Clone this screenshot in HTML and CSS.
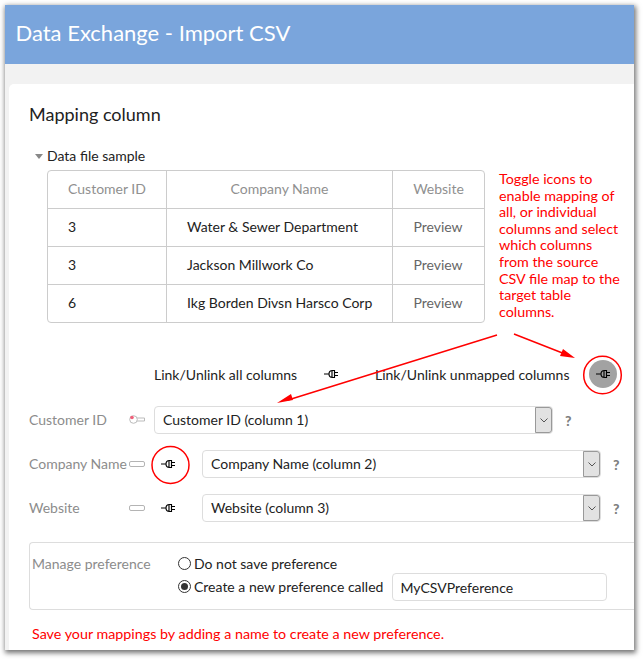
FILE: index.html
```html
<!DOCTYPE html>
<html lang="en">
<head>
<meta charset="utf-8">
<title>Import CSV</title>
<link rel="stylesheet" href="styles.css">
</head>
<body>
<svg width="0" height="0" class="defs">
  <symbol id="plug" viewBox="0 0 14 10">
    <path d="M0 5h5M10.500 1.500H8.500a3.500 3.500 0 0 0 0 7h2ZM8 1.500v7M10.500 3.500H14M10.500 6.500H14" fill="none" stroke="#000" stroke-width="1.150"/>
  </symbol>
</svg>
<div class="frame">
  <header class="banner">Data Exchange - Import CSV</header>
  <main class="card">
    <h2 class="title">Mapping column</h2>
    <div class="sample-head"><span class="tri"></span>Data file sample</div>
    <div class="table">
      <div class="cell head">Customer ID</div><div class="cell head">Company Name</div><div class="cell head last">Website</div>
      <div class="cell num">3</div><div class="cell name">Water &amp; Sewer Department</div><div class="cell prev">Preview</div>
      <div class="cell num">3</div><div class="cell name">Jackson Millwork Co</div><div class="cell prev">Preview</div>
      <div class="cell num">6</div><div class="cell name">Ikg Borden Divsn Harsco Corp</div><div class="cell prev">Preview</div>
    </div>
    <div class="link-row">
      <span class="link-all">Link/Unlink all columns</span>
      <svg class="plug"><use href="#plug"/></svg>
      <span class="link-un">Link/Unlink unmapped columns</span>
      <span class="plug-btn"><svg class="plug"><use href="#plug"/></svg></span>
    </div>
    <div class="map-row">
      <span class="map-label">Customer ID</span>
      <svg class="key" viewBox="0 0 16 9"><path d="M7.500 3h8v3h-8" fill="#fff" stroke="#bbb"/><circle cx="4.500" cy="4.500" r="3.800" fill="#fff" stroke="#bbb"/><circle cx="3" cy="2.500" r="1.800" fill="#f0607a"/></svg>
      <div class="select"><span class="sel-text">Customer ID (column 1)</span><span class="sel-btn"><svg viewBox="0 0 8 5"><path d="M.5.500 4 4 7.500.500" fill="none" stroke="#555"/></svg></span></div>
      <span class="q">?</span>
    </div>
    <div class="map-row">
      <span class="map-label">Company Name</span>
      <span class="slot"></span>
      <svg class="plug row-plug"><use href="#plug"/></svg>
      <div class="select"><span class="sel-text">Company Name (column 2)</span><span class="sel-btn"><svg viewBox="0 0 8 5"><path d="M.5.500 4 4 7.500.500" fill="none" stroke="#555"/></svg></span></div>
      <span class="q">?</span>
    </div>
    <div class="map-row">
      <span class="map-label">Website</span>
      <span class="slot"></span>
      <svg class="plug row-plug"><use href="#plug"/></svg>
      <div class="select"><span class="sel-text">Website (column 3)</span><span class="sel-btn"><svg viewBox="0 0 8 5"><path d="M.5.500 4 4 7.500.500" fill="none" stroke="#555"/></svg></span></div>
      <span class="q">?</span>
    </div>
    <section class="pref">
      <span class="pref-label">Manage preference</span>
      <div class="pref-opts">
        <div class="opt"><span class="radio"></span>Do not save preference</div>
        <div class="opt"><span class="radio on"></span>Create a new preference called<span class="pref-input">MyCSVPreference</span></div>
      </div>
    </section>
    <p class="save-note">Save your mappings by adding a name to create a new preference.</p>
    <p class="note">Toggle icons to enable mapping of all, or individual columns and select which columns from the source CSV file map to the target table columns.</p>
  </main>
  <svg class="overlay" viewBox="0 0 643 659" width="643" height="659">
    <circle cx="602.500" cy="375" r="18.800" fill="none" stroke="#f00" stroke-width="1.500"/>
    <circle cx="170.500" cy="465" r="18.500" fill="none" stroke="#f00" stroke-width="1.500"/>
    <path d="M497 335 288 400M514 334 565 354" fill="none" stroke="#f00" stroke-width="1.500"/>
    <path d="M277 403 291 394 293 400ZM575 358 563 349 560 356Z" fill="#f00"/>
  </svg>
</div>
</body>
</html>
```
FILE: styles.css
```css
* { box-sizing: border-box; }
html, body { margin: 0; padding: 0; background: #fff; }
body { font-family: Lato, "Open Sans", sans-serif; font-size: 14px; color: #222; width: 643px; height: 659px; overflow: hidden; }
.defs { position: absolute; }
.frame { position: relative; margin: 5px 0 0 5px; width: 629px; height: 645px; background: #f2f2f2; box-shadow: 1px 2px 5px 1px rgba(0,0,0,.55); display: flex; flex-direction: column; }
.banner { height: 59px; background: #7aa5dc; color: #fff; font-size: 22px; line-height: 55px; padding-left: 10.500px; flex: none; }
.card { position: relative; margin: 20px 0 0 4px; flex: 1; background: #fff; border-radius: 5px 0 0 0; padding: 18px 0 0 20px; }
.title { margin: 0; font-size: 18px; font-weight: 400; line-height: 24px; color: #222; }
.sample-head { display: flex; align-items: center; margin: 20px 0 0 6px; height: 20px; font-size: 14px; line-height: 20px; }
.tri { width: 0; height: 0; border: 4px solid transparent; border-top: 5px solid #888; border-bottom: 0; margin-right: 4px; }
.table { display: grid; grid-template-columns: 119px 226px 91px; grid-template-rows: 38px 38px 38px 37px; width: 438px; margin: 4px 0 0 18px; border: 1px solid #ccc; border-radius: 4px; height: 153px; }
.cell { display: flex; align-items: center; border-right: 1px solid #ccc; border-bottom: 1px solid #ccc; padding: 0 0 2px 20px; }
.cell:nth-child(3n) { border-right: 0; }
.cell:nth-last-child(-n+3) { border-bottom: 0; }
.head { color: #909090; justify-content: center; padding: 0 0 2px; }
.num { padding-left: 20px; }
.prev { color: #666; justify-content: center; padding: 0 1px 2px 0; }
.link-row { position: relative; display: flex; align-items: center; height: 36px; margin: 33px 0 0 125px; }
.link-all { width: 170px; }
.link-un { margin-left: 37px; width: 214px; white-space: nowrap; }
.plug { width: 14px; height: 10px; flex: none; }
.plug-btn { width: 28px; height: 28px; border-radius: 50%; background: #a2a2a2; display: flex; align-items: center; justify-content: center; }
.map-row { display: flex; align-items: center; height: 28px; margin-bottom: 16px; }
.link-row + .map-row { margin-top: 14px; }
.map-label { width: 100px; color: #8c8c8c; white-space: nowrap; flex: none; padding-bottom: 2px; }
.key { width: 16px; height: 9px; margin: -2px 9px 0 0; flex: none; }
.slot { width: 16px; height: 6px; border: 1px solid #b4b4b4; border-radius: 2px; flex: none; }
.row-plug { margin: 0 27px 0 16px; }
.select { width: 399px; height: 28px; border: 1px solid #ddd; border-radius: 4px; display: flex; align-items: center; justify-content: space-between; padding-left: 8px; background: #fff; flex: none; }
.sel-text { padding-bottom: 2px; }
.sel-btn { width: 17px; height: 26px; background: #e2e2e2; border: 1px solid #999; border-radius: 0 3px 3px 0; display: flex; align-items: center; justify-content: center; }
.sel-btn svg { width: 8px; height: 5px; }
.q { margin-left: 12px; font-weight: 900; color: #808080; font-size: 14px; }
.pref { display: flex; margin-top: 20px; height: 68px; border: 1px solid #ddd; border-right: 0; border-radius: 4px 0 0 4px; padding: 10px 0 0 2px; }
.pref-label { width: 146px; color: #8c8c8c; line-height: 20px; flex: none; margin-top: 1px; }
.pref-opts { display: flex; flex-direction: column; }
.opt { display: flex; align-items: center; height: 20px; margin-bottom: 3px; white-space: nowrap; }
.radio { width: 13px; height: 13px; border: 1px solid #333; border-radius: 50%; margin-right: 3px; flex: none; display: flex; align-items: center; justify-content: center; background: #fff; }
.radio.on::after { content: ""; width: 7px; height: 7px; border-radius: 50%; background: #333; }
.pref-input { display: block; width: 215px; height: 28px; line-height: 28px; border: 1px solid #ddd; border-radius: 4px; margin: 2px 0 0 9px; padding-left: 7px; }
.save-note { margin: 15px 0 0 3px; color: #f00; line-height: 18px; font-size: 14.300px; }
.note { position: absolute; left: 490px; top: 87px; width: 123px; margin: 0; color: #f00; line-height: 16.600px; font-size: 14.300px; }
.overlay { position: absolute; left: -5px; top: -5px; pointer-events: none; }
```
